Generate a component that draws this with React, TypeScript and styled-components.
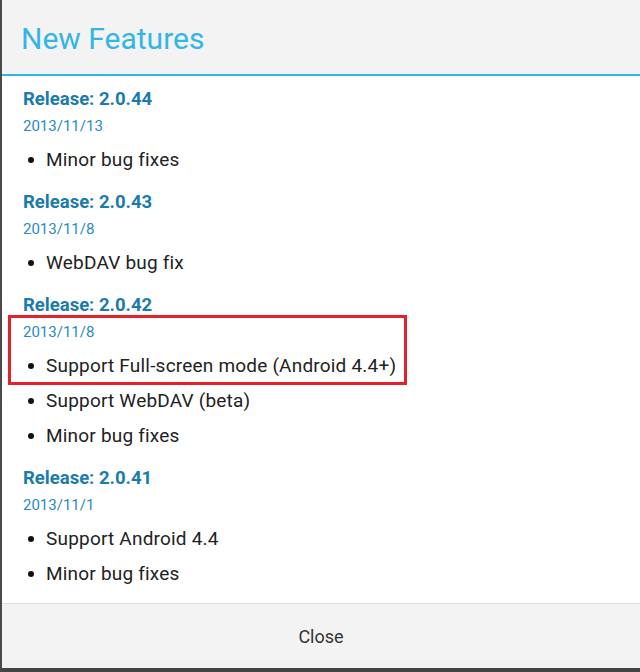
import styled, { createGlobalStyle } from 'styled-components';

const GlobalStyle = createGlobalStyle`
  html, body {
    margin: 0;
    padding: 0;
    background: #3a3a3a;
  }
  #root {
    height: 100vh;
  }
`;

const Dialog = styled.div`
  display: flex;
  flex-direction: column;
  height: 100%;
  box-sizing: border-box;
  border-left: 2px solid #4a4a4a;
  border-bottom: 4px solid #444;
  background: #fff;
  font-family: Roboto, 'Liberation Sans', sans-serif;
  overflow: hidden;
`;

const Header = styled.div`
  height: 74px;
  flex-shrink: 0;
  display: flex;
  align-items: center;
  padding-left: 19px;
  background: #f3f3f3;
  border-bottom: 2px solid #33b5e5;
`;

const Title = styled.h1`
  margin: 0 0 -2px;
  font-size: 30px;
  font-weight: 400;
  color: #33b5e5;
`;

const Content = styled.div`
  flex: 1;
  overflow: hidden;
  padding: 11px 0 0 21px;
`;

const Release = styled.section`
  position: relative;
  margin-bottom: 13px;
`;

const Version = styled.div`
  font-size: 18.5px;
  font-weight: 700;
  line-height: 24px;
  color: #1a7bad;
`;

const Date = styled.div`
  margin-top: 3px;
  font-size: 15px;
  line-height: 24px;
  color: #2a8ac1;
`;

const Items = styled.ul`
  list-style: none;
  margin: 0;
  padding: 4px 0 0;
`;

const Item = styled.li`
  display: flex;
  align-items: center;
  height: 35px;
  font-size: 19px;
  letter-spacing: 0.2px;
  color: #222;

  &::before {
    content: '';
    width: 6px;
    height: 6px;
    border-radius: 50%;
    background: #111;
    margin: 0 12px 0 5px;
  }
`;

const Annotation = styled.div`
  position: absolute;
  top: 22px;
  left: -15px;
  width: 399px;
  height: 70px;
  box-sizing: border-box;
  border: 3px solid #e5202b;
  pointer-events: none;
`;

const Footer = styled.div`
  height: 64px;
  flex-shrink: 0;
  display: flex;
  align-items: center;
  justify-content: center;
  background: #f3f3f3;
  border-top: 1px solid #e2e2e2;
`;

const CloseButton = styled.button`
  border: none;
  background: none;
  font-family: inherit;
  font-size: 18px;
  color: #333;
  cursor: pointer;
  padding: 0;
`;

const releases = [
  { version: '2.0.44', date: '2013/11/13', items: ['Minor bug fixes'] },
  { version: '2.0.43', date: '2013/11/8', items: ['WebDAV bug fix'] },
  {
    version: '2.0.42',
    date: '2013/11/8',
    items: ['Support Full-screen mode (Android 4.4+)', 'Support WebDAV (beta)', 'Minor bug fixes'],
    highlight: true,
  },
  { version: '2.0.41', date: '2013/11/1', items: ['Support Android 4.4', 'Minor bug fixes'] },
];

const App: React.FC = () => {
  return (
    <>
      <GlobalStyle />
      <Dialog>
        <Header>
          <Title>New Features</Title>
        </Header>
        <Content>
          {releases.map((r) => (
            <Release key={r.version}>
              <Version>Release: {r.version}</Version>
              <Date>{r.date}</Date>
              <Items>
                {r.items.map((item) => (
                  <Item key={item}>{item}</Item>
                ))}
              </Items>
              {r.highlight && <Annotation />}
            </Release>
          ))}
        </Content>
        <Footer>
          <CloseButton>Close</CloseButton>
        </Footer>
      </Dialog>
    </>
  );
};

export default App;
